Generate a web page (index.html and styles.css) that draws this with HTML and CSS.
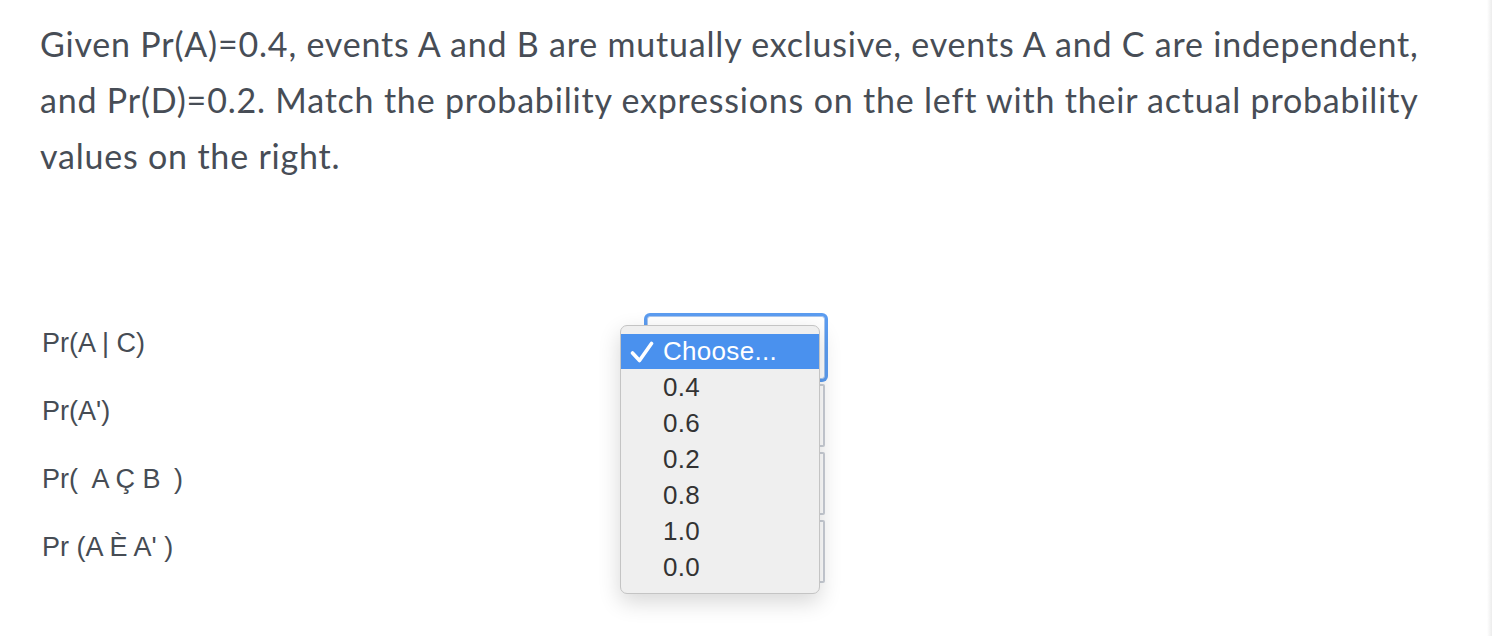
FILE: index.html
```html
<!DOCTYPE html>
<html lang="en">
<head>
<meta charset="utf-8">
<title>Match probabilities</title>
<link rel="stylesheet" href="styles.css">
</head>
<body>
<div class="page">
  <p class="question">Given Pr(A)=0.4, events A and B are mutually exclusive, events A and C are independent, and Pr(D)=0.2. Match the probability expressions on the left with their actual probability values on the right.</p>
  <div class="match">
    <div class="row">
      <div class="label">Pr(A | C)</div>
      <div class="select focused"></div>
    </div>
    <div class="row">
      <div class="label">Pr(A')</div>
      <div class="select"></div>
    </div>
    <div class="row">
      <div class="label">Pr(&ensp;A Ç B&ensp;)</div>
      <div class="select"></div>
    </div>
    <div class="row">
      <div class="label">Pr (A È A' )</div>
      <div class="select"></div>
    </div>
    <ul class="menu">
      <li class="opt selected"><svg class="check" width="24" height="22" viewBox="0 0 24 22"><path d="M2.5 12 L9.5 19.5 L21.5 2.5" fill="none" stroke="#ffffff" stroke-width="3.6" stroke-linecap="round" stroke-linejoin="round"/></svg>Choose...</li>
      <li class="opt">0.4</li>
      <li class="opt">0.6</li>
      <li class="opt">0.2</li>
      <li class="opt">0.8</li>
      <li class="opt">1.0</li>
      <li class="opt">0.0</li>
    </ul>
  </div>
</div>
</body>
</html>
```
FILE: styles.css
```css
html, body {
  margin: 0;
  padding: 0;
}
html {
  background: linear-gradient(to right, #ffffff calc(100% - 5px), #ececec 100%);
}
.page {
  box-sizing: border-box;
  min-height: 636px;
  padding: 16px 0 0 40px;
  width: 1480px;
}
.question {
  margin: 0;
  font-family: Lato, "Liberation Sans", sans-serif;
  font-size: 34px;
  letter-spacing: 0.8px;
  line-height: 56px;
  color: #474d56;
  width: 1398px;
}
.match {
  position: relative;
  margin-top: 132px;
  display: flex;
  flex-direction: column;
  gap: 5px;
}
.row {
  display: grid;
  grid-template-columns: 607px 178px;
  height: 63px;
}
.label {
  font-family: "Liberation Sans", Arial, sans-serif;
  font-size: 27px;
  line-height: 30px;
  color: #464c54;
  padding-top: 12px;
  padding-left: 2px;
  white-space: nowrap;
}
.select {
  box-sizing: border-box;
  border: 2px solid #c9ced6;
  border-radius: 2px;
  background: #fff;
}
.select.focused {
  border: 1px solid #a9c6ee;
  box-shadow: 0 0 0 3px #5b9cf0;
  border-radius: 3px;
}
.menu {
  position: absolute;
  left: 580px;
  top: 9px;
  width: 200px;
  height: 269px;
  box-sizing: border-box;
  margin: 0;
  padding: 8px 0 0;
  list-style: none;
  background: #efefef;
  border: 1px solid #c4c4c4;
  border-radius: 7px;
  box-shadow: 0 8px 22px rgba(0, 0, 0, 0.16);
  font-family: "Liberation Sans", Arial, sans-serif;
  font-size: 26px;
  letter-spacing: 0.3px;
  color: #333333;
}
.opt {
  height: 36px;
  line-height: 36px;
  padding-left: 42px;
  position: relative;
}
.opt.selected {
  height: 35px;
  line-height: 35px;
  background: #4a91ee;
  color: #ffffff;
}
.check {
  position: absolute;
  left: 9px;
  top: 7px;
}
```
